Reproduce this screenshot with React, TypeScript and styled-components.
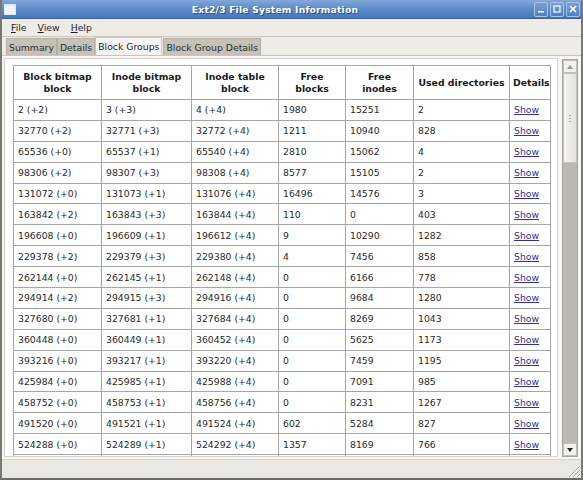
import styled, { createGlobalStyle } from "styled-components";

const GlobalStyle = createGlobalStyle`
  html, body {
    margin: 0;
    padding: 0;
    background: #efebe7;
  }
  body {
    font-family: "DejaVu Sans", "Liberation Sans", sans-serif;
    font-size: 9.3px;
    color: #1e1e1e;
  }
`;

const Window = styled.div`
  width: 583px;
  height: 480px;
  display: flex;
  flex-direction: column;
  box-sizing: border-box;
  border-left: 2px solid #7a7873;
  border-right: 2px solid #7a7873;
  border-bottom: 2px solid #6e6c68;
  background: #efebe7;
  overflow: hidden;
`;

const TitleBar = styled.div`
  height: 18px;
  flex: none;
  display: flex;
  align-items: center;
  padding: 0 3px 0 4px;
  background: linear-gradient(#84a9da, #5f8ccb 45%, #4677bb);
  border-bottom: 1px solid #3b5f93;
  margin: 0 -2px;
`;

const TitleIcon = styled.div`
  width: 10px;
  height: 8px;
  border: 1px solid #dfe8f4;
  border-top-width: 2px;
  background: #eef3fa;
  flex: none;
`;

const Title = styled.div`
  flex: 1;
  text-align: center;
  color: #ffffff;
  font-weight: bold;
  font-size: 9.2px;
  letter-spacing: 0.2px;
  text-shadow: 1px 1px 0 #2d5287;
`;

const WinButtons = styled.div`
  display: flex;
  gap: 2px;
`;

const WinButton = styled.div`
  width: 12px;
  height: 13px;
  border: 1px solid #a9c3e6;
  border-radius: 2px;
  background: linear-gradient(#7aa2d6, #4e7fc1);
  display: flex;
  align-items: center;
  justify-content: center;
`;

const MenuBar = styled.div`
  height: 17px;
  flex: none;
  display: flex;
  align-items: center;
  padding-left: 4px;
  border-bottom: 1px solid #c9c5bd;
`;

const MenuItem = styled.div`
  padding: 0 5px;
  margin-right: 1px;
  u {
    text-decoration: underline;
  }
`;

const TabStrip = styled.div`
  height: 18px;
  flex: none;
  display: flex;
  align-items: flex-end;
  padding-left: 4px;
`;

const Tab = styled.div<{ $active?: boolean }>`
  height: ${(p) => (p.$active ? "18px" : "17px")};
  box-sizing: border-box;
  display: flex;
  align-items: center;
  padding: 0 2px;
  background: ${(p) => (p.$active ? "#f7f6f4" : "#c6c2ba")};
  border: 1px solid ${(p) => (p.$active ? "#c9c5be" : "#b3afa7")};
  border-bottom: none;
  margin-right: ${(p) => (p.$active ? "1px" : "0")};
  color: ${(p) => (p.$active ? "#1e1e1e" : "#2a2a2a")};
`;

const Page = styled.div`
  flex: 1;
  min-height: 0;
  display: flex;
  padding: 2px 1px 2px 2px;
  background: #f7f6f4;
  border-top: 1px solid #c9c5be;
`;

const Viewport = styled.div`
  flex: 1;
  min-width: 0;
  overflow: hidden;
  background: #ffffff;
  border: 1px solid #d8d4cd;
  padding: 6px 0 0 8px;
`;

const Table = styled.table`
  border-collapse: collapse;
  table-layout: fixed;
  width: 537px;
  font-size: 9.3px;
`;

const HeadCell = styled.th`
  height: 33px;
  padding: 0 3px;
  border: 1px solid #a6a6a6;
  font-weight: bold;
  text-align: center;
  vertical-align: middle;
  line-height: 12px;
  color: #1a1a1a;
`;

const Cell = styled.td`
  height: 19.9px;
  padding: 0 4px;
  border: 1px solid #a6a6a6;
  white-space: nowrap;
  vertical-align: middle;
  color: #2a2a2a;
`;

const ShowLink = styled.a`
  color: #33338f;
  text-decoration: underline;
  cursor: pointer;
`;

const ScrollBar = styled.div`
  width: 14px;
  flex: none;
  margin: 1px 2px 0 4px;
  display: flex;
  flex-direction: column;
  background: #bdb8b0;
  border: 1px solid #a9a59d;
`;

const Arrow = styled.div`
  height: 11px;
  flex: none;
  background: #f3f1ee;
  border: 1px solid #c2beb6;
  display: flex;
  align-items: center;
  justify-content: center;
`;

const Slider = styled.div`
  height: 88px;
  flex: none;
  background: linear-gradient(90deg, #f4f3f1, #e6e3de);
  border: 1px solid #c7c3bb;
  display: flex;
  flex-direction: column;
  align-items: center;
  justify-content: center;
  gap: 2px;
`;

const GripDot = styled.div`
  width: 2px;
  height: 1px;
  background: #a8a49c;
`;

const Trough = styled.div`
  flex: 1;
`;

const StatusBar = styled.div`
  height: 18px;
  flex: none;
  display: flex;
  justify-content: flex-end;
  align-items: flex-end;
  border-top: 1px solid #d6d2cb;
  background: #ebe8e3;
`;

const rows: [string, string, string, string, string, string][] = [
  ["2 (+2)", "3 (+3)", "4 (+4)", "1980", "15251", "2"],
  ["32770 (+2)", "32771 (+3)", "32772 (+4)", "1211", "10940", "828"],
  ["65536 (+0)", "65537 (+1)", "65540 (+4)", "2810", "15062", "4"],
  ["98306 (+2)", "98307 (+3)", "98308 (+4)", "8577", "15105", "2"],
  ["131072 (+0)", "131073 (+1)", "131076 (+4)", "16496", "14576", "3"],
  ["163842 (+2)", "163843 (+3)", "163844 (+4)", "110", "0", "403"],
  ["196608 (+0)", "196609 (+1)", "196612 (+4)", "9", "10290", "1282"],
  ["229378 (+2)", "229379 (+3)", "229380 (+4)", "4", "7456", "858"],
  ["262144 (+0)", "262145 (+1)", "262148 (+4)", "0", "6166", "778"],
  ["294914 (+2)", "294915 (+3)", "294916 (+4)", "0", "9684", "1280"],
  ["327680 (+0)", "327681 (+1)", "327684 (+4)", "0", "8269", "1043"],
  ["360448 (+0)", "360449 (+1)", "360452 (+4)", "0", "5625", "1173"],
  ["393216 (+0)", "393217 (+1)", "393220 (+4)", "0", "7459", "1195"],
  ["425984 (+0)", "425985 (+1)", "425988 (+4)", "0", "7091", "985"],
  ["458752 (+0)", "458753 (+1)", "458756 (+4)", "0", "8231", "1267"],
  ["491520 (+0)", "491521 (+1)", "491524 (+4)", "602", "5284", "827"],
  ["524288 (+0)", "524289 (+1)", "524292 (+4)", "1357", "8169", "766"],
];

const colWidths = [88, 90, 87, 67, 68, 96, 41];

function App() {
  return (
    <>
      <GlobalStyle />
      <Window>
        <TitleBar>
          <TitleIcon />
          <Title>Ext2/3 File System Information</Title>
          <WinButtons>
            <WinButton>
              <svg width="8" height="8" viewBox="0 0 8 8">
                <rect x="1" y="6" width="6" height="1.5" fill="#fff" />
              </svg>
            </WinButton>
            <WinButton>
              <svg width="8" height="8" viewBox="0 0 8 8">
                <rect x="1" y="1" width="6" height="6" fill="none" stroke="#fff" strokeWidth="1.2" />
              </svg>
            </WinButton>
            <WinButton>
              <svg width="8" height="8" viewBox="0 0 8 8">
                <path d="M1 1 L7 7 M7 1 L1 7" stroke="#fff" strokeWidth="1.6" />
              </svg>
            </WinButton>
          </WinButtons>
        </TitleBar>
        <MenuBar>
          <MenuItem>
            <u>F</u>ile
          </MenuItem>
          <MenuItem>
            <u>V</u>iew
          </MenuItem>
          <MenuItem>
            <u>H</u>elp
          </MenuItem>
        </MenuBar>
        <TabStrip>
          <Tab>Summary</Tab>
          <Tab>Details</Tab>
          <Tab $active>Block Groups</Tab>
          <Tab>Block Group Details</Tab>
        </TabStrip>
        <Page>
          <Viewport>
            <Table>
              <colgroup>
                {colWidths.map((w, i) => (
                  <col key={i} style={{ width: w }} />
                ))}
              </colgroup>
              <thead>
                <tr>
                  <HeadCell>
                    Block bitmap
                    <br />
                    block
                  </HeadCell>
                  <HeadCell>
                    Inode bitmap
                    <br />
                    block
                  </HeadCell>
                  <HeadCell>
                    Inode table
                    <br />
                    block
                  </HeadCell>
                  <HeadCell>
                    Free
                    <br />
                    blocks
                  </HeadCell>
                  <HeadCell>
                    Free
                    <br />
                    inodes
                  </HeadCell>
                  <HeadCell>Used directories</HeadCell>
                  <HeadCell>Details</HeadCell>
                </tr>
              </thead>
              <tbody>
                {rows.map((r, i) => (
                  <tr key={i}>
                    {r.map((v, j) => (
                      <Cell key={j}>{v}</Cell>
                    ))}
                    <Cell>
                      <ShowLink>Show</ShowLink>
                    </Cell>
                  </tr>
                ))}
                <tr>
                  {colWidths.map((_, j) => (
                    <Cell key={j} />
                  ))}
                </tr>
              </tbody>
            </Table>
          </Viewport>
          <ScrollBar>
            <Arrow>
              <svg width="6" height="4" viewBox="0 0 6 4">
                <path d="M0 4 L3 0 L6 4 Z" fill="#9a968f" />
              </svg>
            </Arrow>
            <Slider>
              <GripDot />
              <GripDot />
              <GripDot />
            </Slider>
            <Trough />
            <Arrow>
              <svg width="6" height="4" viewBox="0 0 6 4">
                <path d="M0 0 L6 0 L3 4 Z" fill="#222" />
              </svg>
            </Arrow>
          </ScrollBar>
        </Page>
        <StatusBar>
          <svg width="14" height="14" viewBox="0 0 14 14">
            <path d="M13 2 L2 13 M13 6 L6 13 M13 10 L10 13" stroke="#a9a59e" strokeWidth="1" />
            <path d="M13 3 L3 13 M13 7 L7 13 M13 11 L11 13" stroke="#ffffff" strokeWidth="1" />
          </svg>
        </StatusBar>
      </Window>
    </>
  );
}

export default App;
